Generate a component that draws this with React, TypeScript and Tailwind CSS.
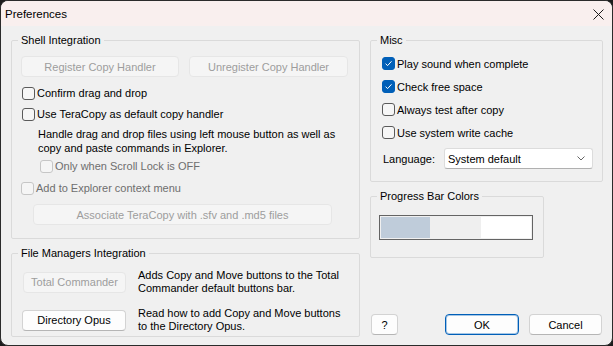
import React from "react";

function CheckBox({ checked = false, disabled = false }: { checked?: boolean; disabled?: boolean }) {
  let cls = "w-[13px] h-[13px] rounded-[3px] border flex items-center justify-center shrink-0 ";
  if (checked) cls += "bg-[#005fb8] border-[#005fb8]";
  else if (disabled) cls += "bg-[#f5f5f5] border-[#c6c6c6]";
  else cls += "bg-[#f6f6f6] border-[#5a5a5a]";
  return (
    <span className={cls}>
      {checked && (
        <svg width="9" height="9" viewBox="0 0 9 9">
          <path d="M1.6 4.7 L3.6 6.6 L7.5 2.3" stroke="white" strokeWidth="1" fill="none" />
        </svg>
      )}
    </span>
  );
}

function CheckRow({
  label,
  checked = false,
  disabled = false,
  className = "",
}: {
  label: string;
  checked?: boolean;
  disabled?: boolean;
  className?: string;
}) {
  return (
    <div className={"flex items-center gap-[2px] " + className}>
      <CheckBox checked={checked} disabled={disabled} />
      <span className={disabled ? "text-[#6e6e6e]" : "text-black"}>{label}</span>
    </div>
  );
}

function Btn({
  children,
  disabled = false,
  primary = false,
  className = "",
}: {
  children: React.ReactNode;
  disabled?: boolean;
  primary?: boolean;
  className?: string;
}) {
  let cls = "h-[21px] rounded-[4px] border flex items-center justify-center shrink-0 ";
  if (disabled) cls += "bg-[#f5f5f5] border-[#e6e6e6] text-[#9d9d9d] ";
  else if (primary) cls += "bg-[#fdfdfd] border-[#005fb8] text-black shadow-[inset_0_0_0_1px_rgba(0,95,184,0.35)] ";
  else cls += "bg-[#fdfdfd] border-[#d3d3d3] border-b-[#b5b5b5] text-black ";
  return <div className={cls + className}>{children}</div>;
}

export default function App() {
  return (
    <div className="w-[613px] h-[346px] bg-[#1c1c1c] font-['Liberation_Sans',Arial,sans-serif] text-[11px] leading-[16px] text-black">
      <div className="w-full h-full rounded-[8px] overflow-hidden border border-[#2b2b2b] bg-[#f0f0f0] flex flex-col">
        {/* Title bar */}
        <div className="h-[25px] bg-[#f9efee] flex items-center pl-[4px] pr-[8px] shrink-0">
          <span className="text-[11.5px] text-black">Preferences</span>
          <svg className="ml-auto mt-[1px]" width="11" height="11" viewBox="0 0 11 11">
            <path d="M0.5 0.5 L10.5 10.5 M10.5 0.5 L0.5 10.5" stroke="#1a1a1a" strokeWidth="1" fill="none" />
          </svg>
        </div>

        {/* Body */}
        <div className="flex-1 flex pl-[10px] pt-[6px] gap-[10px]">
          {/* Left column */}
          <div className="w-[349px] flex flex-col">
            <fieldset className="h-[207px] border border-[#dadada] rounded-[2px]">
              <legend className="ml-[6px] px-[3px] leading-[16px]">Shell Integration</legend>
              <div className="flex gap-[10px] pl-[9px] mt-[8px]">
                <Btn disabled className="w-[158px]">Register Copy Handler</Btn>
                <Btn disabled className="w-[159px]">Unregister Copy Handler</Btn>
              </div>
              <CheckRow label="Confirm drag and drop" className="h-[20px] mt-[6px] pl-[10px]" />
              <CheckRow label="Use TeraCopy as default copy handler" className="h-[20px] mt-[1px] pl-[10px]" />
              <div className="pl-[26px] mt-[3px] leading-[14px]">
                Handle drag and drop files using left mouse button as well as
                <br />
                copy and paste commands in Explorer.
              </div>
              <CheckRow label="Only when Scroll Lock is OFF" disabled className="h-[20px] mt-[1px] pl-[28px]" />
              <CheckRow label="Add to Explorer context menu" disabled className="h-[20px] mt-[2px] pl-[9px]" />
              <div className="pl-[21px] mt-[6px]">
                <Btn disabled className="w-[299px]">Associate TeraCopy with .sfv and .md5 files</Btn>
              </div>
            </fieldset>

            <fieldset className="h-[92px] mt-[6px] border border-[#dadada] rounded-[2px]">
              <legend className="ml-[6px] px-[3px] leading-[16px]">File Managers Integration</legend>
              <div className="flex items-center pl-[11px] mt-[8px] gap-[12px]">
                <Btn disabled className="w-[103px]">Total Commander</Btn>
                <div className="leading-[13px]">
                  Adds Copy and Move buttons to the Total
                  <br />
                  Commander default buttons bar.
                </div>
              </div>
              <div className="flex items-center pl-[10px] mt-[12px] gap-[12px]">
                <Btn className="w-[104px]">Directory Opus</Btn>
                <div className="leading-[13px]">
                  Read how to add Copy and Move buttons
                  <br />
                  to the Directory Opus.
                </div>
              </div>
            </fieldset>
          </div>

          {/* Right column */}
          <div className="w-[233px] flex flex-col pb-[10px]">
            <fieldset className="h-[150px] border border-[#dadada] rounded-[2px]">
              <legend className="ml-[6px] px-[3px] leading-[16px]">Misc</legend>
              <div className="mt-[4px] pl-[11px] flex flex-col">
                <CheckRow label="Play sound when complete" checked className="h-[23px]" />
                <CheckRow label="Check free space" checked className="h-[23px]" />
                <CheckRow label="Always test after copy" className="h-[23px]" />
                <CheckRow label="Use system write cache" className="h-[23px]" />
              </div>
              <div className="flex items-center mt-[4px] pl-[12px] h-[21px]">
                <span className="w-[61px]">Language:</span>
                <div className="w-[149px] h-[21px] bg-white border border-[#dcdcdc] border-b-[#b0b0b0] rounded-[3px] flex items-center pl-[3px] pr-[7px]">
                  <span>System default</span>
                  <svg className="ml-auto" width="8" height="5" viewBox="0 0 8 5">
                    <path d="M0.5 0.5 L4 4 L7.5 0.5" stroke="#555" strokeWidth="0.9" fill="none" />
                  </svg>
                </div>
              </div>
            </fieldset>

            <fieldset className="w-[174px] h-[70px] mt-[6px] border border-[#dadada] rounded-[2px]">
              <legend className="ml-[6px] px-[3px] leading-[16px]">Progress Bar Colors</legend>
              <div className="mt-[11px] pl-[8px]">
                <div className="w-[154px] h-[25px] border border-[#646464] p-[1px] flex">
                  <div className="w-[49px] h-full bg-[#bfccda]" />
                  <div className="w-[51px] h-full bg-[#efefef]" />
                  <div className="flex-1 h-full bg-white" />
                </div>
              </div>
            </fieldset>

            <div className="mt-auto flex items-center pl-[1px] pr-[1px]">
              <Btn className="w-[27px]">?</Btn>
              <Btn primary className="w-[74px] ml-auto">OK</Btn>
              <Btn className="w-[73px] ml-[10px]">Cancel</Btn>
            </div>
          </div>
        </div>
      </div>
    </div>
  );
}
